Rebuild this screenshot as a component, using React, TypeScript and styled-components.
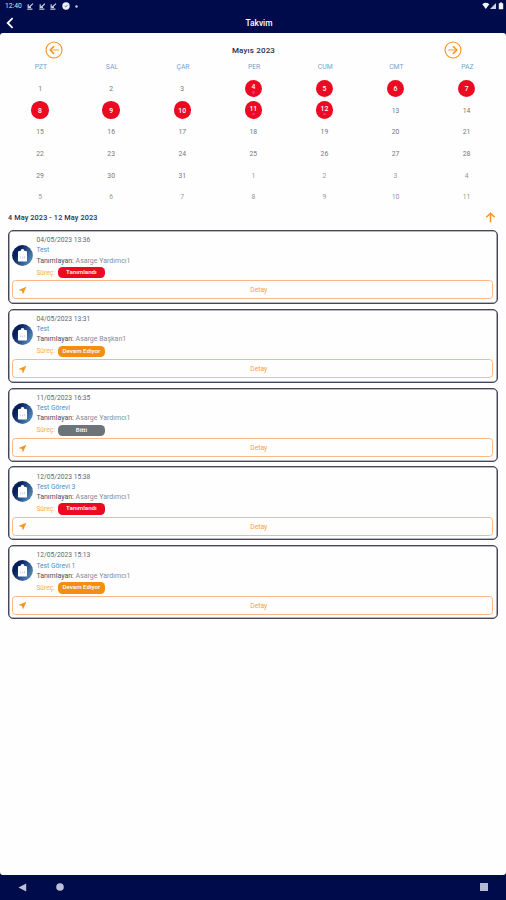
import React from 'react';
import styled, { createGlobalStyle } from 'styled-components';

const NAVY = '#000b4b';
const ORANGE = '#f7941d';
const RED = '#eb0a22';

const GlobalStyle = createGlobalStyle`
  * { box-sizing: border-box; }
  body { margin: 0; background: ${NAVY}; font-family: Roboto, "Liberation Sans", sans-serif; }
`;

const Screen = styled.div`
  width: 506px;
  height: 900px;
  display: flex;
  flex-direction: column;
  background: ${NAVY};
`;

const StatusBar = styled.div`
  height: 12px;
  display: flex;
  align-items: center;
  padding: 0 2px 0 5px;
  color: #dfe1ee;
  font-size: 6.7px;
  line-height: 12px;
`;

const Clock = styled.span`
  width: 22px;
`;

const Notifications = styled.div`
  display: flex;
  align-items: center;
  gap: 5.2px;
  flex: 1;
`;

const TitleBar = styled.header`
  height: 21px;
  display: grid;
  grid-template-columns: 20px 1fr 12px;
  align-items: center;
  padding-left: 4px;
  color: #fff;
`;

const Title = styled.h1`
  margin: 0;
  text-align: center;
  font-size: 8.4px;
  font-weight: 500;
  line-height: 20px;
`;

const Panel = styled.main`
  height: 841.5px;
  background: #fefefe;
  border-radius: 3px;
`;

const MonthBar = styled.div`
  display: flex;
  justify-content: space-between;
  align-items: center;
  height: 33px;
  padding: 0 44px 0 45px;
`;

const MonthName = styled.div`
  font-size: 8px;
  letter-spacing: 0.15px;
  padding-top: 1px;
  font-weight: 500;
  color: #2a2d4c;
`;

const Weekdays = styled.div`
  display: grid;
  grid-template-columns: repeat(7, 71.1px);
  height: 11.3px;
  margin: -4.6px 0 0 5.3px;
  align-items: center;
  justify-items: center;
  font-size: 6.8px;
  color: #6fa6d0;
`;

const Days = styled.div`
  display: grid;
  grid-template-columns: repeat(7, 71.1px);
  grid-auto-rows: 21.7px;
  margin: 4.8px 0 0 4.5px;
  align-items: center;
  justify-items: center;
`;

const Day = styled.div<{ $marked: boolean; $outside: boolean; $dot: boolean }>`
  width: 17.4px;
  height: 17.4px;
  border-radius: 50%;
  display: flex;
  flex-direction: column;
  align-items: center;
  justify-content: center;
  font-size: 6.8px;
  line-height: 8px;
  font-weight: ${(p) => (p.$marked ? 500 : 400)};
  color: ${(p) => (p.$marked ? '#fff' : p.$outside ? '#999' : '#777')};
  background: ${(p) => (p.$marked ? RED : 'transparent')};
  padding-top: ${(p) => (p.$dot ? '0' : '1px')};
`;

const EventDot = styled.span`
  width: 2.4px;
  height: 2.4px;
  border-radius: 50%;
  background: #ef2f80;
`;

const RangeBar = styled.div`
  display: flex;
  align-items: center;
  justify-content: space-between;
  height: 20px;
  margin-top: -.2px;
  padding: 0 10px 0 8px;
  font-size: 7.3px;
  letter-spacing: 0.12px;
  font-weight: 500;
  color: #2d2f4a;
`;

const CardList = styled.section`
  display: flex;
  flex-direction: column;
  gap: 4.8px;
  padding: 2.5px 8px 0;
`;

const Card = styled.article`
  height: 74px;
  border: 1px solid #454756;
  box-shadow: inset 0 0 0 0.6px #70727e;
  border-radius: 5px;
  padding: 4.2px 4.4px 0 3.4px;
`;

const CardBody = styled.div`
  display: flex;
  align-items: flex-start;
  gap: 3px;
  height: 45.3px;
`;

const IconSlot = styled.div`
  display: flex;
  padding-top: 9.8px;
`;

const Lines = styled.div`
  display: flex;
  flex-direction: column;
  font-size: 6.7px;
`;

const Line = styled.div<{ $color: string }>`
  height: 10.2px;
  line-height: 10.6px;
  color: ${(p) => p.$color};
  white-space: nowrap;
`;

const OwnerLine = styled(Line)`
  font-size: 7px;
`;

const Label = styled.span`
  color: #4c4e62;
`;

const StatusLine = styled.div`
  display: flex;
  align-items: center;
  height: 14px;
  color: #f9ab5a;
`;

const ProcessLabel = styled.span`
  width: 21.5px;
`;

const Status = styled.span<{ $color: string }>`
  width: 47px;
  height: 11.3px;
  border-radius: 4.5px;
  background: ${(p) => p.$color};
  color: #fff;
  font-size: 6.2px;
  font-weight: 500;
  line-height: 11px;
  text-align: center;
`;

const DetailButton = styled.button`
  display: grid;
  grid-template-columns: 9px 1fr 9px;
  align-items: center;
  width: 100%;
  height: 19px;
  margin: 0;
  padding: 1px 0 0 4.5px;
  border: 1px solid #fbb784;
  border-radius: 3.5px;
  background: transparent;
  color: #f9a14c;
  font: 6.8px Roboto, sans-serif;
  text-align: center;
`;

const ButtonLabel = styled.span`
  padding-left: 8px;
`;

const NavBar = styled.nav`
  flex: 1;
  display: flex;
  align-items: center;
  padding: 0 17px 0 18px;
  gap: 29px;
`;

const NavEnd = styled.div`
  margin-left: auto;
  display: flex;
`;

const DownloadMark = () => (
  <svg width="6.5" height="7" viewBox="0 0 6.5 7" fill="none" stroke="#c9cce0" strokeWidth="1.2">
    <path d="M6 .6 2 4.2M1.2 1.2V4.4H4M.3 6.1H5.4" />
  </svg>
);

const CircleArrow = ({ back = false }: { back?: boolean }) => (
  <svg width="18" height="18" viewBox="0 0 18 18" fill="none" stroke={ORANGE} strokeLinecap="round" strokeLinejoin="round">
    <circle cx="9" cy="9" r="8" strokeWidth="1.1" />
    <g transform={back ? 'rotate(180 9 9)' : undefined}>
      <path d="M4.6 9H12" strokeWidth="0.9" />
      <path d="M9.4 5.6 12.9 9 9.4 12.4" strokeWidth="1.5" />
    </g>
  </svg>
);

const TaskIcon = () => (
  <svg width="21" height="21" viewBox="0 0 21 21">
    <defs>
      <linearGradient id="taskFill" x1="0" y1="0.2" x2="1" y2="0.8">
        <stop offset="0.25" stopColor="#07205d" />
        <stop offset="1" stopColor="#5b94c7" />
      </linearGradient>
    </defs>
    <circle cx="10.5" cy="10.5" r="10.4" fill="url(#taskFill)" />
    <path d="M7.2 6H8.6A1.9 1.9 0 0 1 12.4 6H13.8A1.2 1.2 0 0 1 15 7.2V15.4A1.2 1.2 0 0 1 13.8 16.6H7.2A1.2 1.2 0 0 1 6 15.4V7.2A1.2 1.2 0 0 1 7.2 6Z" fill="#fff" />
    <path d="M8.7 11.3V13.3M10.5 11.8V13.3M12.3 10.9V13.3" stroke="#b9c9de" strokeWidth="0.8" />
  </svg>
);

const weekdays = ['PZT', 'SAL', 'ÇAR', 'PER', 'CUM', 'CMT', 'PAZ'];
const days = Array.from({ length: 42 }, (_, i) => ({
  number: i < 31 ? i + 1 : i - 30,
  outside: i >= 31,
  marked: i >= 3 && i <= 11,
  dot: i === 3 || i === 10 || i === 11,
}));

const statusColors: Record<string, string> = {
  Tanımlandı: RED,
  'Devam Ediyor': '#f28e12',
  Bitti: '#6a7479',
};

const tasks = [
  { date: '04/05/2023 13:36', name: 'Test', owner: 'Asarge Yardımcı1', status: 'Tanımlandı' },
  { date: '04/05/2023 13:31', name: 'Test', owner: 'Asarge Başkan1', status: 'Devam Ediyor' },
  { date: '11/05/2023 16:35', name: 'Test Görevi', owner: 'Asarge Yardımcı1', status: 'Bitti' },
  { date: '12/05/2023 15:38', name: 'Test Görevi 3', owner: 'Asarge Yardımcı1', status: 'Tanımlandı' },
  { date: '12/05/2023 15:13', name: 'Test Görevi 1', owner: 'Asarge Yardımcı1', status: 'Devam Ediyor' },
];

export default function App() {
  return (
    <>
      <GlobalStyle />
      <Screen>
        <StatusBar>
          <Clock>12:40</Clock>
          <Notifications>
            <DownloadMark />
            <DownloadMark />
            <DownloadMark />
            <svg width="8" height="8" viewBox="0 0 8 8">
              <circle cx="4" cy="4" r="3.7" fill="#eef0f8" />
              <path d="M2.6 4 3.7 5 5.8 2.8" stroke="#59608c" strokeWidth=".9" fill="none" />
            </svg>
            <svg width="3" height="3" viewBox="0 0 3 3"><circle cx="1.5" cy="1.5" r="1.2" fill="#c9cce0" /></svg>
          </Notifications>
          <svg width="22" height="8" viewBox="0 0 22 8" fill="#f3f4fa">
            <path d="M.3 2.2Q3.8-.5 7.3 2.2L3.8 7Z" />
            <path d="M8 7 14 1V7Z" fillOpacity=".85" />
            <path d="M16.8 1.3H18V.6H20V1.3H21.2V7.2H16.8Z" />
          </svg>
        </StatusBar>
        <TitleBar>
          <svg width="12" height="12" viewBox="0 0 12 12" fill="none" stroke="#fff" strokeWidth="1.8">
            <path d="M8.6 1.2 3.7 6 8.6 10.8" />
          </svg>
          <Title>Takvim</Title>
        </TitleBar>
        <Panel>
          <MonthBar>
            <CircleArrow back />
            <MonthName>Mayıs 2023</MonthName>
            <CircleArrow />
          </MonthBar>
          <Weekdays>
            {weekdays.map((d) => <span key={d}>{d}</span>)}
          </Weekdays>
          <Days>
            {days.map((d, i) => (
              <Day key={i} $marked={d.marked} $outside={d.outside} $dot={d.dot}>
                {d.number}
                {d.dot && <EventDot />}
              </Day>
            ))}
          </Days>
          <RangeBar>
            4 May 2023 - 12 May 2023
            <svg width="11" height="11" viewBox="0 0 11 11" fill="none" stroke={ORANGE} strokeWidth="1.5">
              <path d="M5.5 10.3V1.6M1.3 5.3 5.5 1.3 9.7 5.3" />
            </svg>
          </RangeBar>
          <CardList>
            {tasks.map((t) => (
              <Card key={t.date}>
                <CardBody>
                  <IconSlot><TaskIcon /></IconSlot>
                  <Lines>
                    <Line $color="#66676f">{t.date}</Line>
                    <Line $color="#4d8fc6">{t.name}</Line>
                    <OwnerLine $color="#8c8c90"><Label>Tanımlayan:</Label> {t.owner}</OwnerLine>
                    <StatusLine>
                      <ProcessLabel>Süreç:</ProcessLabel>
                      <Status $color={statusColors[t.status]}>{t.status}</Status>
                    </StatusLine>
                  </Lines>
                </CardBody>
                <DetailButton>
                  <svg width="9" height="9" viewBox="0 0 9 9" fill={ORANGE}>
                    <path d="M8.4 .8 .5 4 4 5 4.9 8.5Z" />
                  </svg>
                  <ButtonLabel>Detay</ButtonLabel>
                </DetailButton>
              </Card>
            ))}
          </CardList>
        </Panel>
        <NavBar>
          <svg width="9" height="9" viewBox="0 0 9 9" fill="#bcc0d9"><path d="M8.2.5V8.5L.5 4.5Z" /></svg>
          <svg width="8" height="8" viewBox="0 0 8 8" fill="#bcc0d9"><circle cx="4" cy="4" r="3.8" /></svg>
          <NavEnd>
            <svg width="10" height="10" viewBox="0 0 10 10"><rect x="1" y="1" width="8" height="8" fill="#b4b8d3" /></svg>
          </NavEnd>
        </NavBar>
      </Screen>
    </>
  );
}
